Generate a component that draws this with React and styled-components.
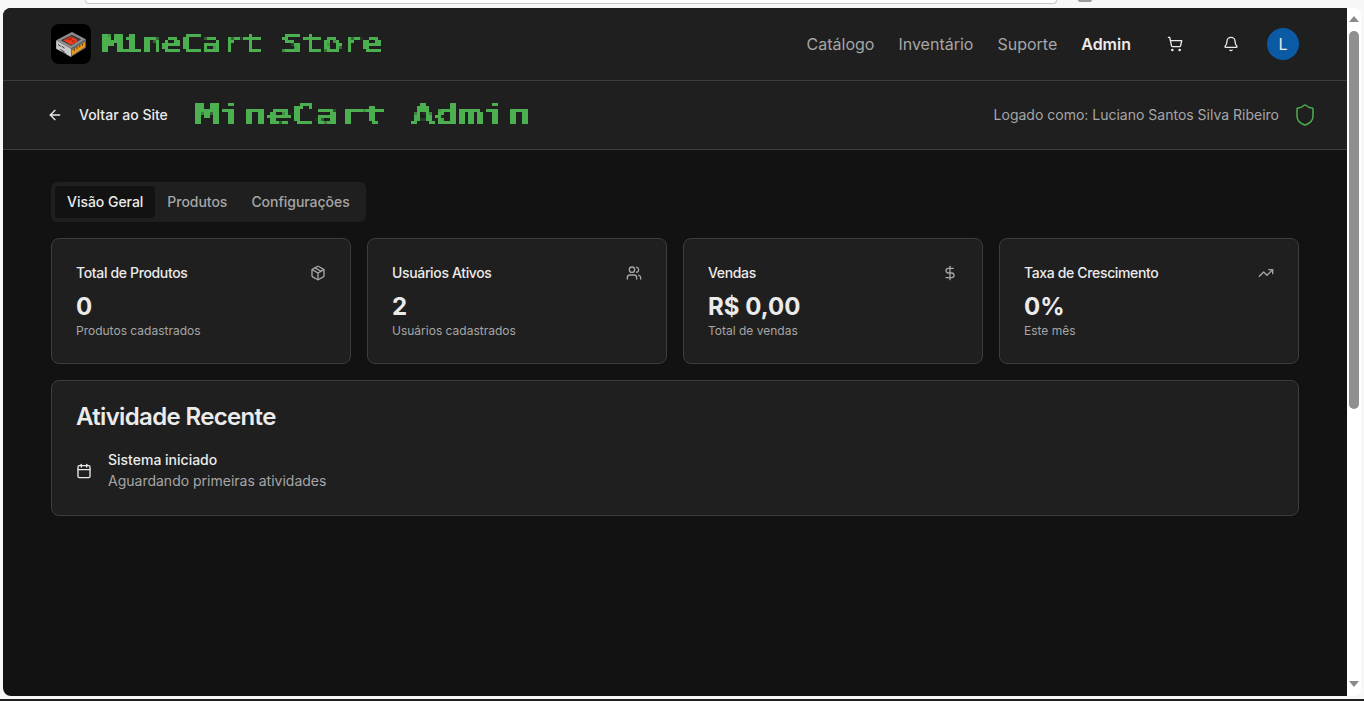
import React from "react";
import styled, { createGlobalStyle } from "styled-components";
import {
  ArrowLeft,
  Bell,
  Calendar,
  DollarSign,
  Package,
  Shield,
  ShoppingCart,
  TrendingUp,
  Users,
} from "lucide-react";

const Global = createGlobalStyle`
  html, body { margin: 0; padding: 0; overflow: hidden; }
  body { background: #f7f7f7; font-family: Inter, "Liberation Sans", sans-serif; }
  * { box-sizing: border-box; }
`;

const Screen = styled.div`
  width: 1364px;
  height: 701px;
  display: flex;
  flex-direction: column;
  padding-left: 3px;
  border-bottom: 2px solid #202020;
`;

const BrowserStrip = styled.div`
  height: 8px;
  flex: none;
  display: flex;
  align-items: flex-start;
  padding-left: 82px;
  gap: 21px;
`;

const AddressEdge = styled.div`
  width: 972px;
  height: 4px;
  background: #fff;
  border: 1px solid #c8c8c8;
  border-top: 0;
  border-radius: 0 0 10px 10px;
`;

const ProfileDot = styled.div`
  width: 14px;
  height: 2px;
  background: #9a9a9a;
  border-radius: 0 0 7px 7px;
`;

const Frame = styled.div`
  width: 1358px;
  height: 688px;
  flex: none;
  display: flex;
  border-radius: 8px;
  overflow: hidden;
  background: #fff;
`;

const Viewport = styled.div`
  width: 1344px;
  height: 100%;
  background: #121212;
  color: #ebebeb;
`;

const TopBar = styled.header`
  height: 73px;
  padding: 0 48px;
  display: flex;
  align-items: center;
  justify-content: space-between;
  background: #1f1f1f;
  border-bottom: 1px solid #3d3d3d;
`;

const Brand = styled.div`
  display: flex;
  align-items: center;
  gap: 11px;
`;

const LogoBox = styled.div`
  width: 40px;
  height: 40px;
  border-radius: 8px;
  background: #000;
  display: flex;
  align-items: center;
  justify-content: center;
`;

const PixelTitle = styled.div`
  width: ${(p) => p.$width}px;
  height: ${(p) => p.$size + 8}px;
  padding-top: 4px;
  color: #4caf50;
  filter: url(#pixel-type);
  overflow: hidden;
`;

const PixelText = styled.span`
  display: block;
  font-family: "DejaVu Sans Mono", "Liberation Mono", monospace;
  font-weight: 400;
  font-size: ${(p) => p.$size}px;
  line-height: ${(p) => p.$size}px;
  white-space: pre;
  transform: scaleX(${(p) => p.$stretch});
  transform-origin: 0 0;
`;

const HiddenDefs = styled.svg`
  width: 0;
  height: 0;
  display: block;
  flex: none;
`;

const Nav = styled.nav`
  display: flex;
  align-items: center;
  gap: 24px;
`;

const NavLink = styled.a`
  font-size: 16px;
  line-height: 24px;
  font-weight: ${(p) => (p.$active ? 600 : 400)};
  color: ${(p) => (p.$active ? "#ebebeb" : "#a6a6a6")};
`;

const IconGroup = styled.div`
  display: flex;
  align-items: center;
  gap: 16px;
`;

const IconButton = styled.button`
  width: 40px;
  height: 40px;
  padding: 0;
  border: 0;
  background: transparent;
  color: #ebebeb;
  display: flex;
  align-items: center;
  justify-content: center;
`;

const Avatar = styled.div`
  width: 32px;
  height: 32px;
  border-radius: 50%;
  background: #0b5aa6;
  color: #ebebeb;
  font-size: 16px;
  display: flex;
  align-items: center;
  justify-content: center;
`;

const AdminBar = styled.div`
  height: 69px;
  padding: 0 30px 0 44px;
  display: flex;
  align-items: center;
  justify-content: space-between;
  background: #1f1f1f;
  border-bottom: 1px solid #3d3d3d;
`;

const AdminLeft = styled.div`
  display: flex;
  align-items: center;
  gap: 27px;
`;

const BackLink = styled.a`
  display: flex;
  align-items: center;
  gap: 16px;
  font-size: 14px;
  line-height: 20px;
  font-weight: 500;
  color: #ebebeb;
`;

const SignedIn = styled.div`
  display: flex;
  align-items: center;
  gap: 14px;
  font-size: 14px;
  line-height: 20px;
  color: #a6a6a6;
`;

const Content = styled.main`
  padding: 32px 48px;
  display: flex;
  flex-direction: column;
  gap: 16px;
`;

const TabList = styled.div`
  align-self: flex-start;
  height: 40px;
  padding: 4px;
  display: flex;
  background: #1f1f1f;
  border-radius: 6px;
`;

const Tab = styled.div`
  padding: 0 12px;
  display: flex;
  align-items: center;
  font-size: 14px;
  line-height: 20px;
  font-weight: 500;
  letter-spacing: -0.03px;
  border-radius: 4px;
  color: ${(p) => (p.$active ? "#ebebeb" : "#a6a6a6")};
  background: ${(p) => (p.$active ? "#121212" : "transparent")};
`;

const StatGrid = styled.div`
  display: grid;
  grid-template-columns: repeat(4, 300px);
  gap: 16px;
`;

const Card = styled.section`
  background: #1f1f1f;
  border: 1px solid #3d3d3d;
  border-radius: 8px;
  padding: 24px;
`;

const StatHead = styled.div`
  display: flex;
  align-items: center;
  justify-content: space-between;
  height: 20px;
  margin-bottom: 8px;
  color: #a6a6a6;
`;

const StatTitle = styled.h3`
  margin: 0;
  font-size: 14px;
  line-height: 20px;
  font-weight: 500;
  letter-spacing: -0.35px;
  color: #ebebeb;
`;

const StatValue = styled.div`
  font-size: 24px;
  line-height: 32px;
  font-weight: 700;
  color: #ebebeb;
`;

const StatNote = styled.div`
  font-size: 12px;
  line-height: 16px;
  color: #a6a6a6;
`;

const ActivityTitle = styled.h2`
  margin: 0 0 21px;
  font-size: 24px;
  line-height: 24px;
  font-weight: 600;
  letter-spacing: -0.65px;
  color: #ebebeb;
`;

const ActivityRow = styled.div`
  display: flex;
  align-items: center;
  gap: 16px;
  color: #ebebeb;
`;

const ActivityName = styled.div`
  font-size: 14px;
  line-height: 20px;
  font-weight: 500;
  margin-bottom: 1px;
`;

const ActivityNote = styled.div`
  font-size: 14px;
  line-height: 20px;
  color: #a6a6a6;
`;

const ScrollBar = styled.aside`
  width: 14px;
  height: 100%;
  padding: 8px 2px 9px;
  display: flex;
  flex-direction: column;
  align-items: center;
  background: #fff;
`;

const ScrollArrow = styled.div`
  width: 0;
  height: 0;
  flex: none;
  border-left: 5px solid transparent;
  border-right: 5px solid transparent;
  border-${(p) => (p.$down ? "top" : "bottom")}: 6px solid #8a8a8a;
`;

const ScrollThumb = styled.div`
  width: 10px;
  height: 378px;
  flex: none;
  margin-top: 9px;
  margin-bottom: auto;
  background: #8f8f8f;
  border-radius: 5px;
`;

const stats = [
  { title: "Total de Produtos", value: "0", note: "Produtos cadastrados", Icon: Package },
  { title: "Usuários Ativos", value: "2", note: "Usuários cadastrados", Icon: Users },
  { title: "Vendas", value: "R$ 0,00", note: "Total de vendas", Icon: DollarSign },
  { title: "Taxa de Crescimento", value: "0%", note: "Este mês", Icon: TrendingUp },
];

// blocks the real text into 3px cells, with stems thickened first like the pixel font
const PixelFilter = () => (
  <filter id="pixel-type" x="0" y="0" width="100%" height="100%" colorInterpolationFilters="sRGB">
    <feMorphology in="SourceGraphic" operator="dilate" radius="1 0" result="thick" />
    <feFlood x="1" y="1" width="1" height="1" floodColor="#000" />
    <feComposite width="3" height="3" />
    <feTile result="grid" />
    <feComposite in="thick" in2="grid" operator="in" />
    <feMorphology operator="dilate" radius="1" />
    <feComponentTransfer>
      <feFuncA type="linear" slope="3" intercept="-0.6" />
    </feComponentTransfer>
  </filter>
);

const CrateLogo = () => (
  <svg width="32" height="26" viewBox="0 0 34 28">
    <path d="M1 10 18 1l15 8-16 10z" fill="#8d8d8d" />
    <path d="M1 10l16 9v9L1 19z" fill="#c9c9c9" />
    <path d="M17 19l16-10v9l-16 10z" fill="#6d6d6d" />
    <path d="M6 10l12-6 10 5-11 7z" fill="#3b3b3b" />
    <path d="M9 10l7-4 3 1 4 2 1 2-7 4z" fill="#ef3a1c" />
    <path d="M12 7h6v3h-6zM18 10h3v2h-3z" fill="#b92a14" />
    <path d="M3 14l3 2v1l-3-2zM7 16l3 2v1l-3-2zM5 19l5 3v1l-5-3zM7 21.500l5 3v1l-5-3z" fill="#333" />
    <path d="M18 21l14-9v5l-14 9z" fill="#f09a1a" />
    <path d="M20 22l1-.6v-2.500l-1 .6zM23 20l1-.6v-2.500l-1 .6zM26 18.200l1-.6v-2.500l-1 .6zM29 16.400l1-.6v-2.500l-1 .6z" fill="#5a3606" />
  </svg>
);

const App = () => (
  <Screen>
    <Global />
    <HiddenDefs aria-hidden="true">
      <PixelFilter />
    </HiddenDefs>
    <BrowserStrip>
      <AddressEdge />
      <ProfileDot />
    </BrowserStrip>
    <Frame>
      <Viewport>
        <TopBar>
          <Brand>
            <LogoBox>
              <CrateLogo />
            </LogoBox>
            <PixelTitle $width={284} $size={24}>
              <PixelText $size={24} $stretch={1.384}>MineCart Store</PixelText>
            </PixelTitle>
          </Brand>
          <Nav>
            <NavLink>Catálogo</NavLink>
            <NavLink>Inventário</NavLink>
            <NavLink>Suporte</NavLink>
            <NavLink $active>Admin</NavLink>
            <IconGroup>
              <IconButton><ShoppingCart size={16} /></IconButton>
              <IconButton><Bell size={16} /></IconButton>
              <Avatar>L</Avatar>
            </IconGroup>
          </Nav>
        </TopBar>
        <AdminBar>
          <AdminLeft>
            <BackLink>
              <ArrowLeft size={16} />
              Voltar ao Site
            </BackLink>
            <PixelTitle $width={340} $size={29}>
              <PixelText $size={29} $stretch={1.375}>MineCart Admin</PixelText>
            </PixelTitle>
          </AdminLeft>
          <SignedIn>
            Logado como: Luciano Santos Silva Ribeiro
            <Shield size={24} strokeWidth={1.5} color="#4caf50" />
          </SignedIn>
        </AdminBar>
        <Content>
          <TabList>
            <Tab $active>Visão Geral</Tab>
            <Tab>Produtos</Tab>
            <Tab>Configurações</Tab>
          </TabList>
          <StatGrid>
            {stats.map(({ title, value, note, Icon }) => (
              <Card key={title}>
                <StatHead>
                  <StatTitle>{title}</StatTitle>
                  <Icon size={16} />
                </StatHead>
                <StatValue>{value}</StatValue>
                <StatNote>{note}</StatNote>
              </Card>
            ))}
          </StatGrid>
          <Card>
            <ActivityTitle>Atividade Recente</ActivityTitle>
            <ActivityRow>
              <Calendar size={16} />
              <div>
                <ActivityName>Sistema iniciado</ActivityName>
                <ActivityNote>Aguardando primeiras atividades</ActivityNote>
              </div>
            </ActivityRow>
          </Card>
        </Content>
      </Viewport>
      <ScrollBar>
        <ScrollArrow />
        <ScrollThumb />
        <ScrollArrow $down />
      </ScrollBar>
    </Frame>
  </Screen>
);

export default App;
